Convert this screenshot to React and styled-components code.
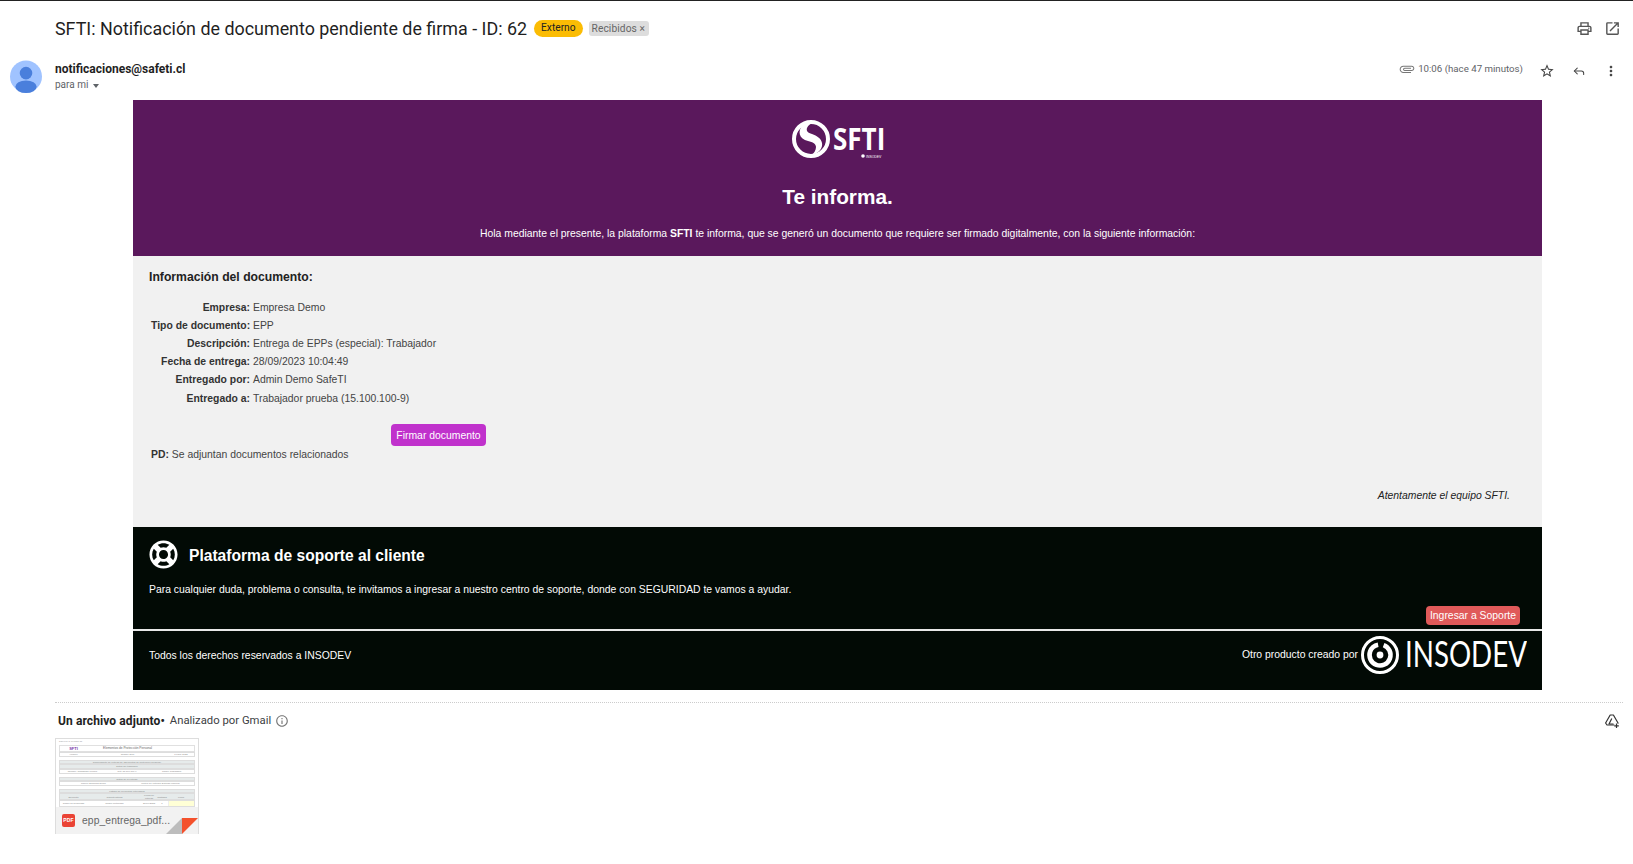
import React from 'react';
import styled, { createGlobalStyle } from 'styled-components';
import {
  MdOutlinePrint,
  MdOpenInNew,
  MdStarBorder,
  MdMoreVert,
  MdAttachFile,
  MdInfoOutline,
} from 'react-icons/md';
import { FaRegLifeRing } from 'react-icons/fa';
import { Reply } from 'lucide-react';

const GlobalStyle = createGlobalStyle`
  html, body {
    margin: 0;
    padding: 0;
    background: #fff;
  }
  * {
    box-sizing: border-box;
  }
  body {
    font-family: "Roboto", "Liberation Sans", sans-serif;
    color: #222;
  }
`;

const Page = styled.div`
  width: 1633px;
  height: 864px;
  overflow: hidden;
  border-top: 1px solid #222;
`;

const SubjectBar = styled.div`
  display: flex;
  align-items: center;
  height: 55px;
  padding: 0 12px 0 55px;
`;

const Subject = styled.h1`
  margin: 0;
  font-family: "Roboto", sans-serif;
  font-size: 17.9px;
  font-weight: 400;
  color: #1f1f1f;
`;

const ExternalTag = styled.span`
  margin-left: 7px;
  padding: 0 7px;
  height: 17px;
  line-height: 16px;
  border-radius: 9px;
  background: #fbbc04;
  font-size: 10.2px;
  color: #222;
`;

const LabelTag = styled.span`
  margin-left: 6px;
  padding: 0 4px 0 3px;
  height: 15px;
  line-height: 15px;
  border-radius: 3px;
  background: #ddd;
  font-size: 10.2px;
  letter-spacing: 0.1px;
  color: #666;
`;

const ToolIcons = styled.div`
  margin-left: auto;
  display: flex;
  gap: 11px;
  color: #555;
  font-size: 17px;
`;

const SenderRow = styled.div`
  display: flex;
  align-items: flex-start;
  height: 44px;
  padding: 4px 6px 0 10px;
`;

const Avatar = styled.svg`
  width: 32px;
  height: 33px;
  flex: none;
`;

const SenderInfo = styled.div`
  margin-left: 13px;
  padding-top: 2px;
`;

const SenderName = styled.div`
  font-size: 12px;
  font-weight: 700;
  line-height: 15px;
  color: #1f1f1f;
`;

const ToMe = styled.div`
  display: flex;
  align-items: center;
  gap: 5px;
  margin-top: 1px;
  font-size: 10px;
  line-height: 14px;
  color: #5f6368;

  &::after {
    content: '';
    border: 3.5px solid transparent;
    border-top: 4px solid #5f6368;
    margin-top: 4px;
  }
`;

const Meta = styled.div`
  margin-left: auto;
  display: flex;
  align-items: center;
  height: 18px;
  color: #444;
  font-size: 16px;
`;

const Clip = styled(MdAttachFile)`
  transform: rotate(90deg);
  color: #777;
  font-size: 16px;
  margin-right: 3px;
`;

const Time = styled.span`
  font-size: 9.7px;
  color: #5f6368;
  margin: -1px 8px 0 0;
`;

const MetaIcon = styled.span`
  display: flex;
  width: 32px;
  justify-content: center;
  margin-top: 3px;
`;

const Mail = styled.div`
  width: 1409px;
  margin-left: 133px;
  font-family: "Liberation Sans", Arial, sans-serif;
  font-size: 10.4px;
`;

const Hero = styled.div`
  height: 156px;
  background: #5a185c;
  color: #fff;
  text-align: center;
  padding-top: 19px;
`;

const LogoSvg = styled.svg`
  display: block;
  margin: 0 auto;
`;

const HeroTitle = styled.h2`
  margin: 26px 0 0;
  font-size: 20.8px;
  line-height: 24px;
  font-weight: 700;
`;

const HeroText = styled.p`
  margin: 18px 0 0;
  line-height: 14px;

  b {
    font-weight: 700;
  }
`;

const InfoPanel = styled.div`
  height: 271px;
  background: #f1f1f1;
  padding: 13px 16px 0;
  color: #444;
`;

const InfoTitle = styled.h3`
  margin: 0;
  font-size: 12.2px;
  line-height: 16px;
  font-weight: 700;
  color: #222;
`;

const InfoGrid = styled.dl`
  display: grid;
  grid-template-columns: 99px auto;
  grid-auto-rows: 18.2px;
  column-gap: 3px;
  align-items: center;
  justify-content: start;
  margin: 13px 0 0 2px;
`;

const InfoLabel = styled.dt`
  font-weight: 700;
  text-align: right;
  color: #333;
  white-space: nowrap;
`;

const InfoValue = styled.dd`
  margin: 0;
  white-space: nowrap;
`;

const SignButton = styled.button`
  display: block;
  margin: 17px 0 0 242px;
  width: 95px;
  height: 22px;
  padding: 0;
  border: 0;
  border-radius: 4px;
  background: #c032cc;
  color: #fff;
  font: inherit;
`;

const Note = styled.p`
  margin: 2px 0 0 2px;
  line-height: 14px;

  b {
    color: #333;
  }
`;

const Regards = styled.p`
  margin: 27px 16px 0 0;
  text-align: right;
  font-style: italic;
  line-height: 14px;
  color: #222;
`;

const SupportPanel = styled.div`
  height: 102px;
  background: #020a05;
  color: #fff;
  padding: 12px 22px 0 16px;
`;

const SupportHead = styled.div`
  display: flex;
  align-items: center;
  gap: 11px;
  height: 30px;
`;

const SupportTitle = styled.h3`
  margin: 4px 0 0;
  font-size: 15.6px;
  font-weight: 700;
`;

const SupportText = styled.p`
  margin: 14px 0 0;
  line-height: 14px;
`;

const SupportButton = styled.button`
  display: block;
  margin: 9px 0 0 auto;
  width: 94px;
  height: 19px;
  padding: 0;
  border: 0;
  border-radius: 4px;
  background: #e05a5a;
  color: #fff;
  font: inherit;
`;

const FooterPanel = styled.div`
  display: flex;
  align-items: center;
  justify-content: space-between;
  height: 61px;
  border-top: 2px solid #e8e8e8;
  background: #020a05;
  color: #fff;
  padding: 0 15px 12px 16px;
`;

const Rights = styled.span`
  margin-top: 2px;
`;

const FooterRight = styled.div`
  display: flex;
  align-items: center;
  gap: 3px;
`;

const Attachments = styled.div`
  margin: 12px 10px 0 55px;
  border-top: 1px dotted #ccc;
`;

const AttachHead = styled.div`
  display: flex;
  align-items: center;
  height: 35px;
  padding: 0 0 0 3px;
  font-size: 11.3px;
  color: #3c4043;
`;

const AttachCount = styled.b`
  font-size: 12px;
  font-weight: 700;
  letter-spacing: 0.1px;
  color: #222;
  margin-right: 5px;
`;

const Info = styled(MdInfoOutline)`
  margin-left: 4px;
  font-size: 14px;
  color: #777;
`;

const DriveIcon = styled.svg`
  margin-left: auto;
  margin-right: 3px;
  color: #333;
`;

const Thumb = styled.div`
  position: relative;
  width: 144px;
  height: 96px;
  border: 1px solid #ddd;
  border-bottom: 0;
  overflow: hidden;
  font-family: "Liberation Sans", sans-serif;
`;

const Doc = styled.div`
  height: 68px;
  padding: 1px 3px 0 3px;
  color: #888;
  font-size: 2.4px;
  line-height: 3px;
  background: #fff;
`;

const DocTop = styled.div`
  height: 5px;
  color: #aaa;
`;

const DocHead = styled.div`
  display: grid;
  grid-template-columns: 27px 1fr 26px;
  border: 0.5px solid #e0e0e0;
  height: 7px;
  align-items: center;
  text-align: center;
  font-size: 3.2px;
  color: #666;
`;

const DocMark = styled.span`
  font-weight: 700;
  color: #7c3aa8;
  font-size: 4px;
`;

const DocRow = styled.div`
  display: grid;
  grid-template-columns: ${p => p.$cols || '1fr'};
  height: ${p => p.$h || 5}px;
  background: ${p => (p.$shade ? '#e6ebeb' : '#fff')};
  border: 0.5px solid #ddd;
  margin-top: ${p => p.$gap || 0}px;
  text-align: center;
  align-items: center;
  overflow: hidden;
`;

const DocCell = styled.span`
  height: 100%;
  background: ${p => (p.$note ? '#ffffd6' : 'transparent')};
  border-left: 0.5px solid #eee;
`;

const ThumbBar = styled.div`
  display: flex;
  align-items: center;
  height: 28px;
  background: #f2f2f2;
  padding: 0 0 2px 6px;
  font-size: 10.3px;
  letter-spacing: 0.1px;
  color: #666;
`;

const PdfBadge = styled.span`
  width: 13px;
  height: 13px;
  border-radius: 2px;
  background: #ea4335;
  color: #fff;
  font-size: 5px;
  font-weight: 700;
  line-height: 13px;
  text-align: center;
  margin-right: 7px;
  flex: none;
`;

const Fold = styled.svg`
  position: absolute;
  right: 0;
  bottom: 0;
`;

const Logo = () => (
  <LogoSvg width="94" height="40" viewBox="0 0 94 40">
    <circle cx="20" cy="20" r="17" fill="none" stroke="#fff" strokeWidth="4" />
    <path
      d="M12 6c-6 6-4 14 5 16 5 1 8 3 8 6 0 3-2 6-4 8 7-2 11-7 10-12-1-5-5-7-10-9-4-1-6-3-5-6 1-3 4-5 7-5-4-1-8 0-11 2z"
      fill="#fff"
    />
    <text transform="translate(42 31) scale(0.84 1)" fontFamily="Open Sans, sans-serif" fontWeight="700" fontSize="31" fill="#fff">SFTI</text>
    <circle cx="72" cy="37" r="1.8" fill="#fff" />
    <text x="75" y="39" fontFamily="Liberation Sans, sans-serif" fontSize="3.4" fill="#fff">INSODEV</text>
  </LogoSvg>
);

const InsodevLogo = () => (
  <svg width="166" height="40" viewBox="0 0 166 40">
    <circle cx="19" cy="20" r="17.5" fill="none" stroke="#fff" strokeWidth="3" />
    <g transform="rotate(-70 19 20)">
      <circle cx="19" cy="20" r="10.5" fill="none" stroke="#fff" strokeWidth="4.6" strokeDasharray="60 6" />
    </g>
    <circle cx="19" cy="20" r="3.4" fill="#fff" />
    <text transform="translate(44 32) scale(0.77 1)" fontFamily="Lato, sans-serif" fontWeight="400" fontSize="36" fill="#fff">INSODEV</text>
  </svg>
);

const rows = [
  ['Empresa:', 'Empresa Demo'],
  ['Tipo de documento:', 'EPP'],
  ['Descripción:', 'Entrega de EPPs (especial): Trabajador'],
  ['Fecha de entrega:', '28/09/2023 10:04:49'],
  ['Entregado por:', 'Admin Demo SafeTI'],
  ['Entregado a:', 'Trabajador prueba (15.100.100-9)'],
];

export default function App() {
  return (
    <Page>
      <GlobalStyle />
      <SubjectBar>
        <Subject>SFTI: Notificación de documento pendiente de firma - ID: 62</Subject>
        <ExternalTag>Externo</ExternalTag>
        <LabelTag>Recibidos ×</LabelTag>
        <ToolIcons>
          <MdOutlinePrint />
          <MdOpenInNew />
        </ToolIcons>
      </SubjectBar>
      <SenderRow>
        <Avatar viewBox="0 0 33 33">
          <circle cx="16.5" cy="16.5" r="16.5" fill="#a0c3ff" />
          <circle cx="16.5" cy="13" r="6.5" fill="#4a7fdc" />
          <ellipse cx="16.5" cy="27" rx="11" ry="6.5" fill="#4a7fdc" />
        </Avatar>
        <SenderInfo>
          <SenderName>notificaciones@safeti.cl</SenderName>
          <ToMe>para mi</ToMe>
        </SenderInfo>
        <Meta>
          <Clip />
          <Time>10:06 (hace 47 minutos)</Time>
          <MetaIcon><MdStarBorder /></MetaIcon>
          <MetaIcon><Reply size={14} strokeWidth={1.8} /></MetaIcon>
          <MetaIcon><MdMoreVert /></MetaIcon>
        </Meta>
      </SenderRow>
      <Mail>
        <Hero>
          <Logo />
          <HeroTitle>Te informa.</HeroTitle>
          <HeroText>
            Hola mediante el presente, la plataforma <b>SFTI</b> te informa, que se generó un documento que requiere ser firmado digitalmente, con la siguiente información:
          </HeroText>
        </Hero>
        <InfoPanel>
          <InfoTitle>Información del documento:</InfoTitle>
          <InfoGrid>
            {rows.map(([label, value]) => (
              <React.Fragment key={label}>
                <InfoLabel>{label}</InfoLabel>
                <InfoValue>{value}</InfoValue>
              </React.Fragment>
            ))}
          </InfoGrid>
          <SignButton>Firmar documento</SignButton>
          <Note><b>PD:</b> Se adjuntan documentos relacionados</Note>
          <Regards>Atentamente el equipo SFTI.</Regards>
        </InfoPanel>
        <SupportPanel>
          <SupportHead>
            <FaRegLifeRing size={29} />
            <SupportTitle>Plataforma de soporte al cliente</SupportTitle>
          </SupportHead>
          <SupportText>
            Para cualquier duda, problema o consulta, te invitamos a ingresar a nuestro centro de soporte, donde con SEGURIDAD te vamos a ayudar.
          </SupportText>
          <SupportButton>Ingresar a Soporte</SupportButton>
        </SupportPanel>
        <FooterPanel>
          <Rights>Todos los derechos reservados a INSODEV</Rights>
          <FooterRight>
            <span>Otro producto creado por</span>
            <InsodevLogo />
          </FooterRight>
        </FooterPanel>
      </Mail>
      <Attachments>
        <AttachHead>
          <AttachCount>Un archivo adjunto•</AttachCount>
          Analizado por Gmail
          <Info />
          <DriveIcon width="16" height="16" viewBox="0 0 16 16" fill="none" stroke="currentColor" strokeWidth="1.2" strokeLinejoin="round">
            <path d="M6.2 2h3.2L14 10l-1 2H3l-1.4-2z" />
            <path d="M7.8 5.5L5 11h4.5" />
            <path d="M12.5 10.5v4.5M10.2 12.8h4.6" stroke="#fff" strokeWidth="3" />
            <path d="M12.5 10.5v4.5M10.2 12.8h4.6" />
          </DriveIcon>
        </AttachHead>
        <Thumb>
          <Doc>
            <DocTop>DEPRO O CLOSE 22</DocTop>
            <DocHead>
              <DocMark>SFTI</DocMark>
              <span>Elementos de Protección Personal</span>
              <span />
            </DocHead>
            <DocRow $cols="27px 1fr 26px" $h={5}><span>Versión</span><span>Código: EPP</span><span>Fecha: 2023</span></DocRow>
            <DocRow $shade $h={4} $gap={3}>Comprobante de entrega de "Elementos de protección personal"</DocRow>
            <DocRow $shade $h={4.5}>Datos del trabajador</DocRow>
            <DocRow $cols="1fr 1fr 1fr" $h={5}><span>Nombre: Trabajador prueba</span><span>Rut: 15.100.100-9</span><span>Cargo: Trabajador</span></DocRow>
            <DocRow $shade $h={4} $gap={3}>Datos de la entrega</DocRow>
            <DocRow $cols="1fr 1fr" $h={5}><span>Razón: Empresa Demo</span><span>Motivo de entrega: Entrega especial</span></DocRow>
            <DocRow $shade $h={4.5} $gap={3}>Listado de elementos entregados</DocRow>
            <DocRow $shade $cols="27px 55px 14px 12px 1fr" $h={7}><span>Elemento</span><span>Características</span><span>Fecha de entrega</span><span>Cantidad</span><span>Firma</span></DocRow>
            <DocRow $cols="27px 55px 14px 12px 1fr" $h={7}><span>Casco de seguridad</span><span>Casco certificado</span><span>28/09/2023</span><span>1</span><DocCell $note /></DocRow>
          </Doc>
          <ThumbBar>
            <PdfBadge>PDF</PdfBadge>
            epp_entrega_pdf...
          </ThumbBar>
          <Fold width="32" height="16" viewBox="0 0 32 16">
            <polygon points="0,16 16,0 16,16" fill="#bdbdbd" />
            <polygon points="16,0 32,0 16,16" fill="#f4512c" />
          </Fold>
        </Thumb>
      </Attachments>
    </Page>
  );
}
